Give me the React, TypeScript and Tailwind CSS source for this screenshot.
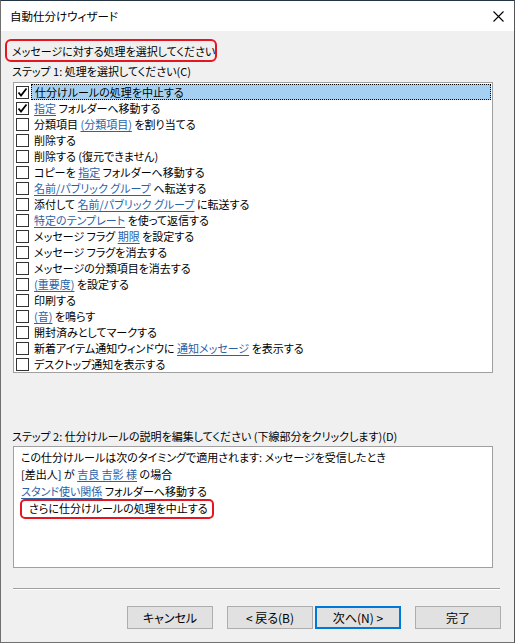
import React from "react";

type Part = [string, boolean?];

const actions: { checked?: boolean; parts: Part[] }[] = [
  { checked: true, parts: [["仕分けルールの処理を中止する"]] },
  { checked: true, parts: [["指定", true], [" フォルダーへ移動する"]] },
  { parts: [["分類項目 "], ["(分類項目)", true], [" を割り当てる"]] },
  { parts: [["削除する"]] },
  { parts: [["削除する (復元できません)"]] },
  { parts: [["コピーを "], ["指定", true], [" フォルダーへ移動する"]] },
  { parts: [["名前/パブリック グループ", true], [" へ転送する"]] },
  { parts: [["添付して "], ["名前/パブリック グループ", true], [" に転送する"]] },
  { parts: [["特定のテンプレート", true], [" を使って返信する"]] },
  { parts: [["メッセージ フラグ "], ["期限", true], [" を設定する"]] },
  { parts: [["メッセージ フラグを消去する"]] },
  { parts: [["メッセージの分類項目を消去する"]] },
  { parts: [["(重要度)", true], [" を設定する"]] },
  { parts: [["印刷する"]] },
  { parts: [["(音)", true], [" を鳴らす"]] },
  { parts: [["開封済みとしてマークする"]] },
  { parts: [["新着アイテム通知ウィンドウに "], ["通知メッセージ", true], [" を表示する"]] },
  { parts: [["デスクトップ通知を表示する"]] },
];

const font = "font-['Noto_Sans_CJK_JP','Noto_Sans',sans-serif] [font-feature-settings:'palt'] text-[11px] text-black";

function Text({ parts }: { parts: Part[] }) {
  return (
    <span className="whitespace-pre">
      {parts.map(([text, link], i) =>
        link ? <span key={i} className="text-[#2a62a6] underline underline-offset-2">{text}</span> : <span key={i}>{text}</span>
      )}
    </span>
  );
}

function Checkbox({ checked }: { checked?: boolean }) {
  return (
    <span className="grid size-[13px] shrink-0 place-items-center border border-[#333] bg-white">
      {checked && (
        <svg width="11" height="11" viewBox="0 0 11 11"><path d="M1.5 5.5 L4 8.5 L9.5 1.5" fill="none" stroke="#000" strokeWidth="1.8" /></svg>
      )}
    </span>
  );
}

function Button({ label, primary }: { label: string; primary?: boolean }) {
  return (
    <button className={`h-[23px] w-[86px] bg-[#e1e1e1] text-[12px] leading-none ${primary ? "border-2 border-[#0078d7]" : "border border-[#adadad]"}`}>{label}</button>
  );
}

export default function App() {
  return (
    <div className={`${font} flex h-[643px] w-[515px] flex-col border border-[#707070] border-t-[#233445] border-r-[#555] bg-[#f0f0f0] leading-[16px]`}>
      <div className="flex h-[30px] items-center justify-between bg-white pl-[9px] pr-[10px] text-[11.5px]">
        <span>自動仕分けウィザード</span>
        <svg width="11" height="11" viewBox="0 0 11 11"><path d="M0.5 0.5 L10.5 10.5 M10.5 0.5 L0.5 10.5" stroke="#000" strokeWidth="1.1" /></svg>
      </div>

      <div className="flex flex-1 flex-col pl-[11px]">
        <div className="relative mt-[12px]">
          <span>メッセージに対する処理を選択してください</span>
          <span className="absolute left-[-7px] top-[-4px] h-[23px] w-[212px] rounded-[6px] border-2 border-[#e5161f]" />
        </div>
        <div className="mt-[4px]">ステップ 1: 処理を選択してください(C)</div>

        <div className="mt-[3px] ml-[1px] h-[291px] w-[480px] border border-[#a0a0a0] bg-white pt-[1px] pl-[2px]">
          {actions.map((a, i) => (
            <div key={i} className="flex h-[16px] items-center">
              <Checkbox checked={a.checked} />
              <div className={`ml-[2px] flex h-[16px] flex-1 items-center pl-[3px] ${i === 0 ? "mr-[1px] border border-dotted border-black bg-[#a6d0f1] pl-[2px]" : ""}`}>
                <Text parts={a.parts} />
              </div>
            </div>
          ))}
        </div>

        <div className="mt-[55px]">ステップ 2: 仕分けルールの説明を編集してください (下線部分をクリックします)(D)</div>
        <div className="mt-[2px] ml-[1px] h-[122px] w-[480px] border border-[#a0a0a0] bg-white pl-[7px] pt-[2px] leading-[17px]">
          <div>この仕分けルールは次のタイミングで適用されます: メッセージを受信したとき</div>
          <div><Text parts={[["[差出人] が "], ["吉良 吉影 様", true], [" の場合"]]} /></div>
          <div><Text parts={[["スタンド使い関係", true], [" フォルダーへ移動する"]]} /></div>
          <div className="relative pl-[8px]">
            <span>さらに仕分けルールの処理を中止する</span>
            <span className="absolute left-[-1px] top-[-1px] h-[20px] w-[194px] rounded-[5px] border-2 border-[#e5161f]" />
          </div>
        </div>

        <div className="mt-[20px] ml-[1px] h-[2px] w-[487px] border-t border-[#a0a0a0] border-b border-b-white" />

        <div className="mt-[16px] flex w-[489px] justify-end">
          <Button label="キャンセル" />
          <div className="ml-[14px] flex gap-[2px]">
            <Button label="< 戻る(B)" />
            <Button label="次へ(N) >" primary />
          </div>
          <div className="ml-[14px]"><Button label="完了" /></div>
        </div>
      </div>
    </div>
  );
}
